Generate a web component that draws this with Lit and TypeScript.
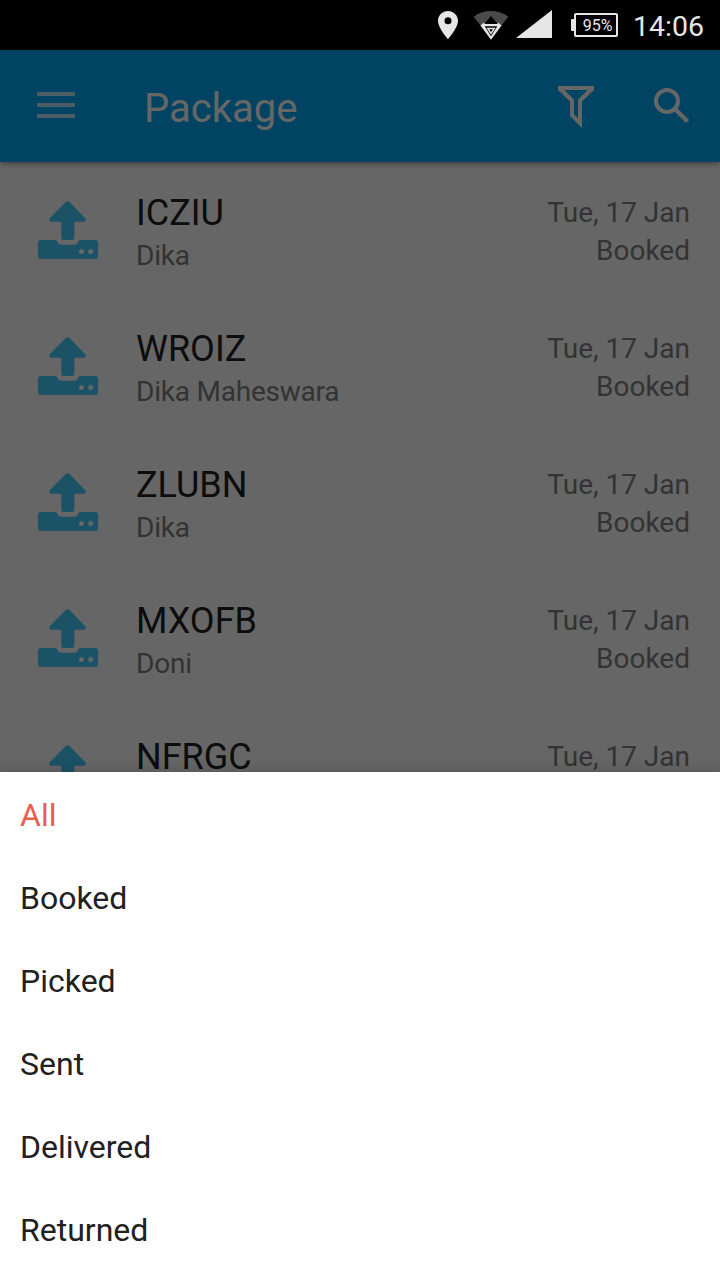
import { LitElement, html, css } from "lit";
import { customElement, state } from "lit/decorators.js";

interface Parcel {
  code: string;
  name: string;
  date: string;
  status: string;
}

const parcels: Parcel[] = [
  { code: "ICZIU", name: "Dika", date: "Tue, 17 Jan", status: "Booked" },
  { code: "WROIZ", name: "Dika Maheswara", date: "Tue, 17 Jan", status: "Booked" },
  { code: "ZLUBN", name: "Dika", date: "Tue, 17 Jan", status: "Booked" },
  { code: "MXOFB", name: "Doni", date: "Tue, 17 Jan", status: "Booked" },
  { code: "NFRGC", name: "", date: "Tue, 17 Jan", status: "" },
];

const filters = ["All", "Booked", "Picked", "Sent", "Delivered", "Returned"];

@customElement("status-bar")
class StatusBar extends LitElement {
  static styles = css`
    :host {
      display: flex;
      height: 50px;
      box-sizing: border-box;
      padding-right: 16px;
      justify-content: flex-end;
      background: #000;
      color: #e6e6e6;
      font-family: Roboto, sans-serif;
    }
    svg {
      display: block;
      flex: none;
    }
    .battery {
      display: flex;
      box-sizing: border-box;
      width: 44px;
      height: 24px;
      margin-top: 13px;
      border: 2px solid #e6e6e6;
      border-radius: 2px;
      justify-content: center;
      font-size: 16px;
      line-height: 21px;
      padding-left: 3px;
    }
    .nub {
      width: 3px;
      height: 12px;
      margin: 19px 0 0 19px;
      background: #e6e6e6;
      border-radius: 1px 0 0 1px;
    }
    .time {
      width: 71px;
      margin-left: 15px;
      font-size: 28.5px;
      line-height: 53px;
      white-space: nowrap;
    }
  `;

  render() {
    return html`
      <svg width="122" height="50" viewBox="430 0 122 50">
        <path fill="#e6e6e6" fill-rule="evenodd" d="M448 11c-5.5 0-10 4.4-10 9.8 0 7.4 10 18.4 10 18.4s10-11 10-18.4c0-5.4-4.5-9.8-10-9.8zM448 17.2a3.5 3.500 0 1 1 0 7a3.500 3.500 0 0 1 0-7z" />
        <path fill="#4a4a4a" d="M491 39L473.700 16.700Q481 11 491 11T508.300 16.700z" />
        <path fill="#000" d="M491 16L499.500 26L491 38L482.500 26z" />
        <path fill="#e6e6e6" fill-rule="evenodd" d="M480.500 25.500L483.500 22.700L485 24H497L498.500 22.700L501.500 25.500L491 39.700zM484.700 26.300L491 36.300L497.300 26.300z" />
        <path fill="none" stroke="#e6e6e6" stroke-width="1.400" d="M487.700 28.500H494.300L491 33.500z" />
        <path fill="#e6e6e6" d="M516 38H552V10z" />
      </svg>
      <div class="nub"></div>
      <div class="battery">95%</div>
      <div class="time">14:06</div>
    `;
  }
}

@customElement("app-header")
class AppHeader extends LitElement {
  static styles = css`
    :host {
      display: flex;
      position: relative;
      box-sizing: border-box;
      height: 112px;
      padding: 0 30px 0 37px;
      background: #03a9f4;
      box-shadow: 0 1px 6px rgba(0, 0, 0, 0.5);
      color: #fff;
      font-family: Roboto, sans-serif;
    }
    svg {
      display: block;
      flex: none;
    }
    .menu {
      margin-top: 42px;
    }
    .title {
      flex: 1;
      margin-left: 69px;
      font-size: 40px;
      line-height: 118px;
    }
    .filter {
      margin: 36px 60px 0 0;
    }
    .search {
      margin-top: 38px;
    }
  `;

  render() {
    return html`
      <svg class="menu" width="38" height="26" viewBox="0 0 38 26">
        <path fill="#fff" fill-opacity="0.75" d="M0 0H38V4H0zM0 11H38V15H0zM0 22H38V26H0z" />
      </svg>
      <div class="title">Package</div>
      <svg class="filter" width="36" height="42" viewBox="0 0 36 42">
        <path fill="#fff" fill-rule="evenodd" d="M0 0H36V4L24 15.500V42L12 30V15.500L0 4zM6.500 4L16 13.500V28.300L20 32.300V13.500L29.500 4z" />
      </svg>
      <svg class="search" width="36" height="36" viewBox="0 0 36 36">
        <circle cx="13" cy="13" r="11" fill="none" stroke="#fff" stroke-width="4" />
        <path stroke="#fff" stroke-width="4.200" d="M21.500 21.500L33.500 33.500" />
      </svg>
    `;
  }
}

@customElement("package-row")
class PackageRow extends LitElement {
  static properties = { parcel: { attribute: false } };
  declare parcel: Parcel;

  static styles = css`
    :host {
      display: flex;
      box-sizing: border-box;
      height: 136px;
      padding: 0 30px 0 38px;
      font-family: Roboto, sans-serif;
      font-size: 28px;
      color: #808080;
    }
    svg {
      display: block;
      flex: none;
      margin-top: 39px;
    }
    .who {
      flex: 1;
      margin: 30px 0 0 38px;
    }
    .code {
      font-size: 36px;
      line-height: 43px;
      color: #222;
    }
    .name {
      line-height: 42px;
      letter-spacing: -0.22px;
    }
    .when {
      margin-top: 32px;
      text-align: right;
      line-height: 38px;
    }
  `;

  render() {
    return html`
      <svg width="60" height="58" viewBox="0 0 60 58">
        <g fill="#46cdff">
          <path d="M28 .8Q29.600-.6 31.200.8L47.300 17.200Q48.800 20.500 46 20.800H36.400V36.500Q36.400 39 34 39H25.700Q23.300 39 23.300 36.500V20.800H13Q10.200 20.500 11.700 17.200z" />
          <path fill-rule="evenodd" d="M3 39H18.300C19.500 42 21 43.800 23.500 43.800H36C38.500 43.800 40 42 41.200 39H57Q60 39 60 42V55Q60 58 57 58H3Q0 58 0 55V42Q0 39 3 39zM43.400 48a2.500 2.500 0 1 0 .01 0zM52.700 48a2.500 2.500 0 1 0 .01 0z" />
        </g>
      </svg>
      <div class="who">
        <div class="code">${this.parcel.code}</div>
        <div class="name">${this.parcel.name}</div>
      </div>
      <div class="when">
        <div>${this.parcel.date}</div>
        <div>${this.parcel.status}</div>
      </div>
    `;
  }
}

@customElement("app-root")
class AppRoot extends LitElement {
  @state() selected = "All";

  static styles = css`
    :host {
      display: flex;
      flex-direction: column;
      height: 1280px;
      overflow: hidden;
      background: #fff;
      font-family: Roboto, sans-serif;
    }
    .page {
      position: relative;
      height: 722px;
      flex: none;
      overflow: hidden;
    }
    .scrim {
      position: absolute;
      inset: 0;
      background: rgba(0, 0, 0, 0.6);
    }
    .sheet {
      flex: 1;
      position: relative;
      padding-top: 2px;
      background: #fff;
      box-shadow: 0 0 14px rgba(0, 0, 0, 0.2);
    }
    .option {
      height: 83px;
      padding-left: 20px;
      font-size: 32px;
      line-height: 83px;
      color: #212121;
    }
    .option.active {
      color: #e8614a;
    }
  `;

  render() {
    return html`
      <status-bar></status-bar>
      <div class="page">
        <app-header></app-header>
        ${parcels.map((p) => html`<package-row .parcel=${p}></package-row>`)}
        <div class="scrim"></div>
      </div>
      <div class="sheet">
        ${filters.map(
          (f) => html`<div class="option ${f === this.selected ? "active" : ""}" @click=${() => (this.selected = f)}>${f}</div>`,
        )}
      </div>
    `;
  }
}
